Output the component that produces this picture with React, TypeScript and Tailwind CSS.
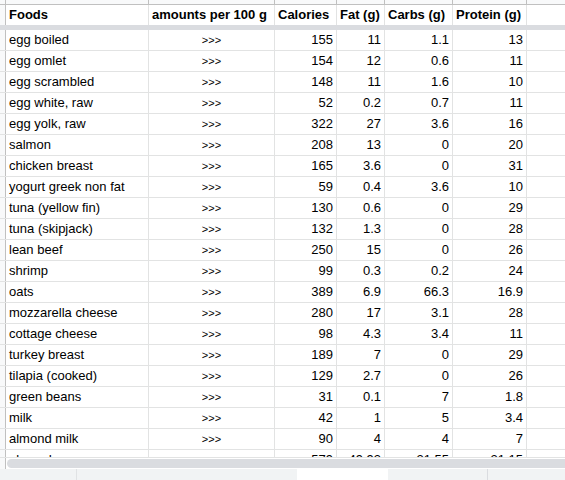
const rows: [string, string, string, string, string][] = [
  ["egg boiled", "155", "11", "1.1", "13"],
  ["egg omlet", "154", "12", "0.6", "11"],
  ["egg scrambled", "148", "11", "1.6", "10"],
  ["egg white, raw", "52", "0.2", "0.7", "11"],
  ["egg yolk, raw", "322", "27", "3.6", "16"],
  ["salmon", "208", "13", "0", "20"],
  ["chicken breast", "165", "3.6", "0", "31"],
  ["yogurt greek non fat", "59", "0.4", "3.6", "10"],
  ["tuna (yellow fin)", "130", "0.6", "0", "29"],
  ["tuna (skipjack)", "132", "1.3", "0", "28"],
  ["lean beef", "250", "15", "0", "26"],
  ["shrimp", "99", "0.3", "0.2", "24"],
  ["oats", "389", "6.9", "66.3", "16.9"],
  ["mozzarella cheese", "280", "17", "3.1", "28"],
  ["cottage cheese", "98", "4.3", "3.4", "11"],
  ["turkey breast", "189", "7", "0", "29"],
  ["tilapia (cooked)", "129", "2.7", "0", "26"],
  ["green beans", "31", "0.1", "7", "1.8"],
  ["milk", "42", "1", "5", "3.4"],
  ["almond milk", "90", "4", "4", "7"],
  ["almonds", "579", "49.93", "21.55", "21.15"],
];

const cell = "h-full shrink-0 border-r border-[#e2e3e3] px-[3px] whitespace-nowrap overflow-hidden";

const App = () => {
  return (
    <div
      className="w-[565px] h-[480px] overflow-hidden bg-white flex flex-col text-[13px] leading-[20px] text-black"
      style={{ fontFamily: '"Liberation Sans", Arial, sans-serif' }}
    >
      {/* Column letters strip (cut off) */}
      <div className="h-[5px] flex bg-[#f8f9fa] border-b border-[#c0c0c0]">
        <div className="w-[6px] shrink-0 border-r border-[#c0c0c0]" />
        <div className="w-[143px] shrink-0 border-r border-[#c0c0c0]" />
        <div className="w-[126px] shrink-0 border-r border-[#c0c0c0]" />
        <div className="w-[62px] shrink-0 border-r border-[#c0c0c0]" />
        <div className="w-[48px] shrink-0 border-r border-[#c0c0c0]" />
        <div className="w-[68px] shrink-0 border-r border-[#c0c0c0]" />
        <div className="w-[74px] shrink-0 border-r border-[#c0c0c0]" />
        <div className="flex-1" />
      </div>

      {/* Header row */}
      <div className="h-[20px] flex font-bold">
        <div className="w-[6px] shrink-0 bg-[#f8f9fa] border-r border-[#c0c0c0]" />
        <div className={`${cell} w-[143px]`}>Foods</div>
        <div className={`${cell} w-[126px]`}>amounts per 100 g</div>
        <div className={`${cell} w-[62px]`}>Calories</div>
        <div className={`${cell} w-[48px]`}>Fat (g)</div>
        <div className={`${cell} w-[68px]`}>Carbs (g)</div>
        <div className={`${cell} w-[74px]`}>Protein (g)</div>
        <div className="flex-1" />
      </div>

      {/* Freeze bar */}
      <div className="h-[5px] bg-[#dadce0]" />

      {/* Data rows */}
      <div className="h-[427px] overflow-hidden">
        {rows.map(([name, cal, fat, carbs, protein]) => (
          <div key={name} className="h-[21px] flex border-b border-[#e2e3e3]">
            <div className="w-[6px] shrink-0 bg-[#f8f9fa] border-r border-[#c0c0c0]" />
            <div className={`${cell} w-[143px]`}>{name}</div>
            <div className={`${cell} w-[126px] text-center text-[11px]`}>&gt;&gt;&gt;</div>
            <div className={`${cell} w-[62px] text-right`}>{cal}</div>
            <div className={`${cell} w-[48px] text-right`}>{fat}</div>
            <div className={`${cell} w-[68px] text-right`}>{carbs}</div>
            <div className={`${cell} w-[74px] text-right`}>{protein}</div>
            <div className="flex-1" />
          </div>
        ))}
      </div>

      {/* Horizontal scrollbar */}
      <div className="h-[12px] flex items-center border-t border-[#e2e3e3]">
        <div className="w-[6px] h-full shrink-0 bg-[#f8f9fa] border-r border-[#c0c0c0]" />
        <div className="flex-1 h-[9px] ml-[1px] rounded-l-full bg-[#dadce0]" />
      </div>

      {/* Sheet tabs bar */}
      <div className="h-[11px] flex bg-[#f1f3f4]">
        <div className="w-[77px] shrink-0 border-r border-[#e0e2e4]" />
        <div className="w-[220px] shrink-0" />
        <div className="w-[91px] shrink-0 bg-white" />
        <div className="w-[100px] shrink-0 border-r border-[#dadce0]" />
        <div className="flex-1" />
      </div>
    </div>
  );
};

export default App;
